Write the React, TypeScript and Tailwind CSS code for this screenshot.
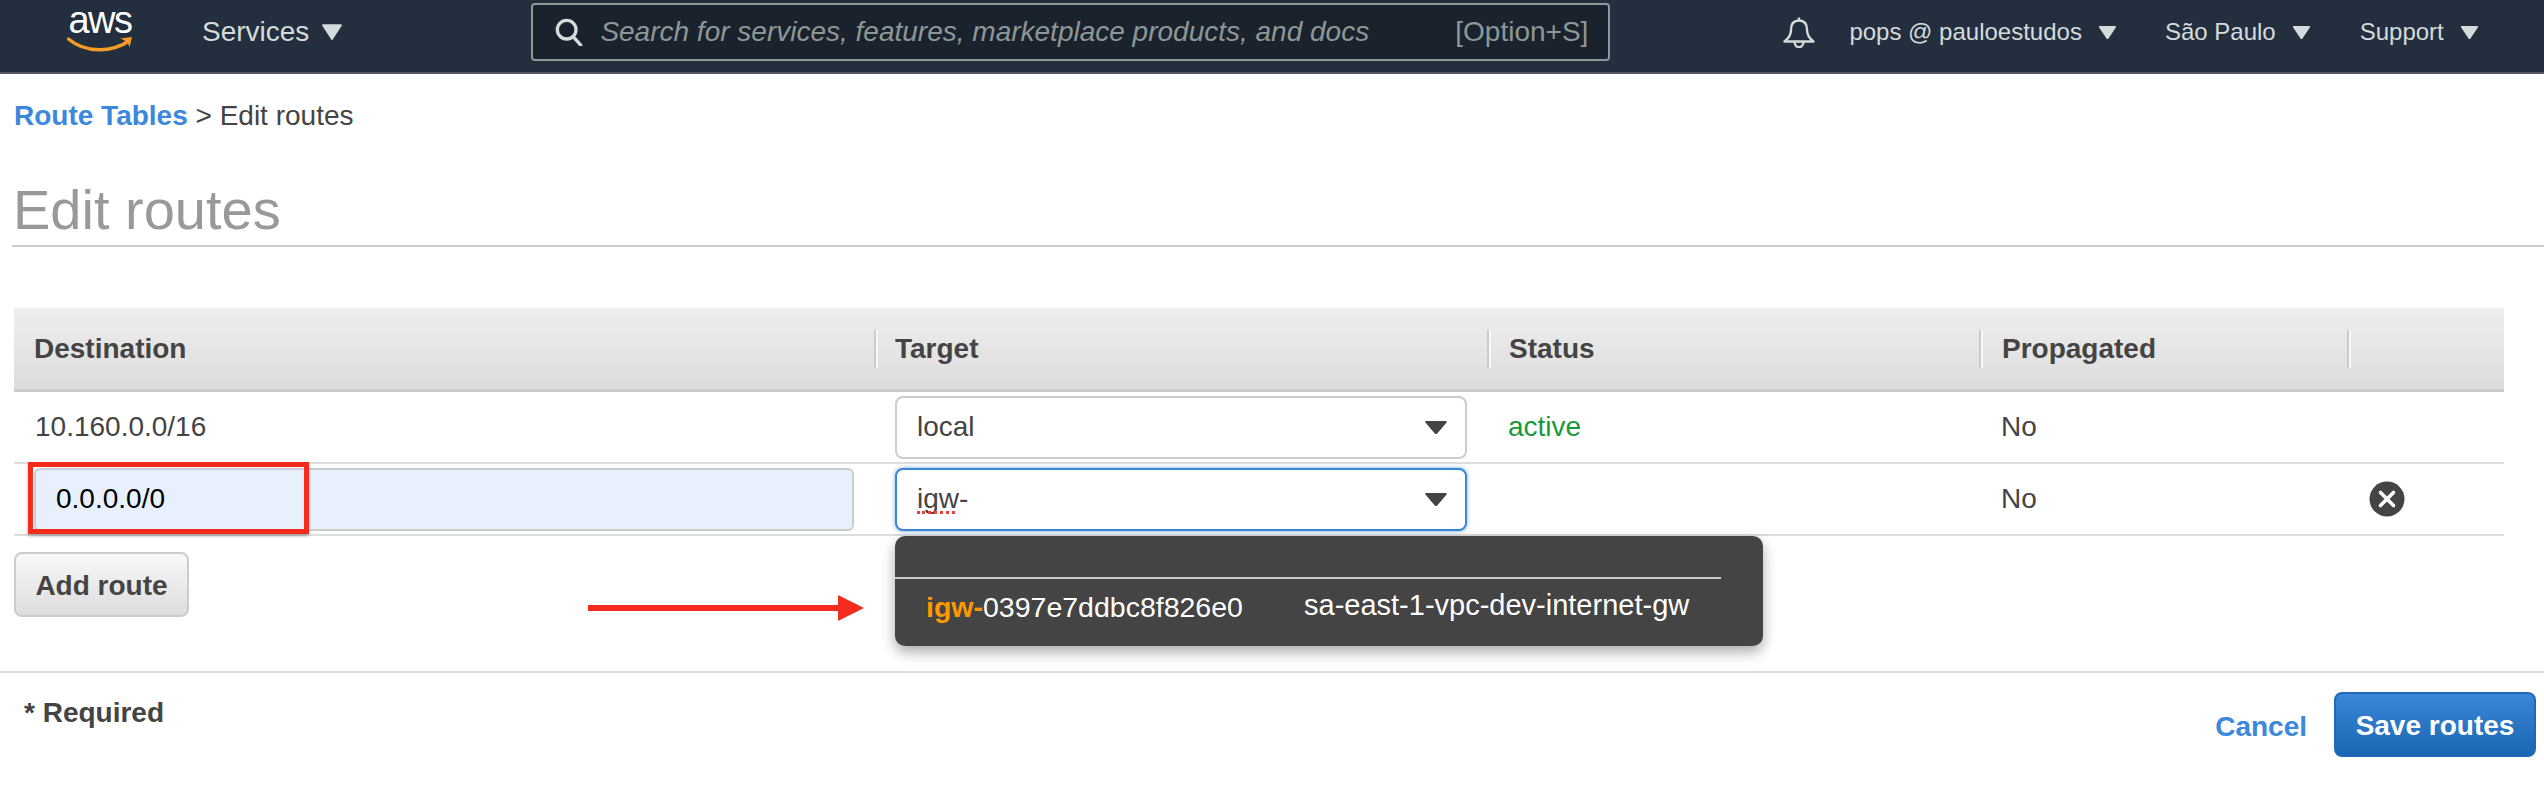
function Caret({ className }: { className: string }) {
  return (
    <svg viewBox="0 0 20 16" preserveAspectRatio="none" className={className} fill="currentColor" stroke="currentColor" strokeWidth="2" strokeLinejoin="round">
      <polygon points="2,2 18,2 10,14" />
    </svg>
  );
}

function NavLabel({ label }: { label: string }) {
  return (
    <div className="flex items-center">
      <span className="text-[24px] leading-[32px]">{label}</span>
      <Caret className="ml-4 h-[15px] w-[19px]" />
    </div>
  );
}

function AwsLogo() {
  return (
    <div className="flex w-[66px] shrink-0 flex-col items-center">
      <span className="mt-[-3px] text-[38px] leading-[24px] tracking-[-1.5px] text-white">aws</span>
      <svg viewBox="0 0 66 18" className="mt-[4px] h-[18px] w-[66px]">
        <path d="M1.5 3 C 18 17, 44 17, 62 5" fill="none" stroke="#f79c24" strokeWidth="3.4" strokeLinecap="round" />
        <path d="M53 2.5 L 65 1 L 62.5 11.5 C 62 7.5, 59 4.5, 53 2.5 Z" fill="#f79c24" />
      </svg>
    </div>
  );
}

function TopNav() {
  return (
    <header className="flex h-[74px] items-center border-b-2 border-[#545b64] bg-[#232f3e] pb-[8px] text-[#d5dbdb]">
      <div className="ml-[67px] flex">
        <AwsLogo />
      </div>
      <div className="ml-[69px] flex items-center">
        <span className="text-[28px] leading-[36px]">Services</span>
        <Caret className="ml-3 h-[18px] w-[22px]" />
      </div>
      <div className="ml-[188px] flex h-[58px] w-[1079px] items-center rounded-[4px] border-2 border-[#8d9797] bg-[#1a222d] pl-[22px] pr-[20px]">
        <svg viewBox="0 0 30 30" className="h-[28px] w-[28px] shrink-0" fill="none" stroke="#d5dbdb" strokeWidth="3.6">
          <circle cx="12.5" cy="12.5" r="10" />
          <path d="M19.5 20 L 27.5 29" strokeLinecap="round" />
        </svg>
        <span className="ml-[17px] text-[28px] italic leading-[36px] text-[#8d9797]">
          Search for services, features, marketplace products, and docs
        </span>
        <span className="ml-auto text-[28px] leading-[36px] text-[#8d9797]">[Option+S]</span>
      </div>
      <svg viewBox="0 0 32 32" className="ml-[173px] h-[32px] w-[32px] shrink-0" fill="none" stroke="#d5dbdb" strokeWidth="2.4" strokeLinejoin="round">
        <path d="M16 1.5 V 4.5 M 16 4.5 C 10 4.5 8 9 8 14 C 8 19 6 22 1.5 25.5 H 30.5 C 26 22 24 19 24 14 C 24 9 22 4.5 16 4.5 Z" />
        <path d="M11.5 25.5 C 11.5 33 20.5 33 20.5 25.5" />
      </svg>
      <div className="ml-[34px]">
        <NavLabel label="pops @ pauloestudos" />
      </div>
      <div className="ml-[48px]">
        <NavLabel label="São Paulo" />
      </div>
      <div className="ml-[49px]">
        <NavLabel label="Support" />
      </div>
    </header>
  );
}

function HeaderCell({ label, divider = true, padding }: { label?: string; divider?: boolean; padding: string }) {
  return (
    <div className="flex items-center">
      {divider && <div className="h-[38px] w-[4px] shrink-0 border-l-2 border-r-2 border-l-[#cccccc] border-r-[#f8f8f8]" />}
      {label && <span className={`${padding} text-[28px] font-bold leading-[32px] text-[#444444]`}>{label}</span>}
    </div>
  );
}

function SelectBox({ value, focused = false }: { value: string; focused?: boolean }) {
  return (
    <div
      className={`flex h-[63px] w-[572px] items-center justify-between rounded-[8px] border-2 bg-white pl-[20px] pr-[17px] ${
        focused ? "border-[#3a87d8] shadow-[0_0_4px_#3a87d8aa]" : "border-[#cccccc]"
      }`}
    >
      <span className="relative text-[28px] leading-[34px] text-[#444444]">
        {value}
        {focused && (
          <span className="absolute left-0 top-[28px] h-[4px] w-[38px] border-b-[3px] border-dotted border-[#e8413c]" />
        )}
      </span>
      <Caret className="h-[15px] w-[24px] text-[#444444]" />
    </div>
  );
}

function RouteGrid() {
  const columns = "grid grid-cols-[860px_613px_492px_368px_157px]";
  return (
    <div className="ml-[14px] mt-[61px] w-[2490px] text-[28px] text-[#444444]">
      <div className={`${columns} h-[84px] border-b-[3px] border-[#cccccc] bg-gradient-to-b from-[#eeeeee] to-[#dddddd]`}>
        <HeaderCell label="Destination" divider={false} padding="pl-[20px]" />
        <HeaderCell label="Target" padding="pl-[17px]" />
        <HeaderCell label="Status" padding="pl-[18px]" />
        <HeaderCell label="Propagated" padding="pl-[19px]" />
        <HeaderCell padding="" />
      </div>

      <div className={`${columns} h-[72px] items-center border-b-2 border-[#dddddd]`}>
        <div className="pl-[21px]">10.160.0.0/16</div>
        <div className="pl-[21px]">
          <SelectBox value="local" />
        </div>
        <div className="pl-[21px] text-[#169a3c]">active</div>
        <div className="pl-[22px]">No</div>
        <div />
      </div>

      <div className={`${columns} h-[72px] items-center border-b-2 border-[#dddddd]`}>
        <div className="relative pl-[20px]">
          <div className="flex h-[63px] w-[820px] items-center rounded-[6px] border-2 border-[#cccccc] bg-[#e8f0fe] pl-[20px] text-black">
            0.0.0.0/0
          </div>
          <div className="absolute left-[14px] top-[-6px] h-[72px] w-[281px] border-[5px] border-[#f32c1e] shadow-[0_2px_3px_#0000004d]" />
        </div>
        <div className="relative pl-[21px]">
          <SelectBox value="igw-" focused />
          <div className="absolute left-[21px] top-[68px] z-10 h-[110px] w-[868px] rounded-[10px] bg-[#444444] text-[29px] text-white shadow-[0_6px_14px_#00000055]">
            <div className="mt-[41px] w-[826px] border-t-2 border-[#cccccc] pt-[10px]">
              <div className="flex items-center pl-[31px] leading-[36px]">
                <span className="w-[378px] text-[28.5px]">
                  <span className="font-bold text-[#ff9900]">igw-</span>0397e7ddbc8f826e0
                </span>
                <span className="mt-[-3px]">sa-east-1-vpc-dev-internet-gw</span>
              </div>
            </div>
          </div>
        </div>
        <div />
        <div className="pl-[22px]">No</div>
        <div className="pl-[22px]">
          <svg viewBox="0 0 36 36" className="h-[36px] w-[36px]">
            <circle cx="18" cy="18" r="17.5" fill="#444444" />
            <path d="M11.5 11.5 L 24.5 24.5 M 24.5 11.5 L 11.5 24.5" stroke="#ffffff" strokeWidth="3.6" strokeLinecap="round" />
          </svg>
        </div>
      </div>
    </div>
  );
}

export default function App() {
  return (
    <div className="relative h-[806px] w-[2544px] overflow-hidden bg-white font-['Liberation_Sans',Arial,sans-serif]">
      <TopNav />

      <div className="ml-[14px] mt-[25px] text-[28px] leading-[34px] text-[#444444]">
        <span className="font-bold text-[#3b88dc]">Route Tables</span> &gt; Edit routes
      </div>

      <div className="ml-[12px] mt-[45px] border-b-2 border-[#cccccc] pb-[3px] pl-[1px]">
        <h1 className="text-[56px] font-normal leading-[64px] text-[#999999]">Edit routes</h1>
      </div>

      <RouteGrid />

      <button className="ml-[14px] mt-[16px] block h-[65px] w-[175px] rounded-[8px] border-2 border-[#cccccc] bg-gradient-to-b from-[#f8f8f8] to-[#dddddd] pt-[2px] text-[28px] font-bold text-[#444444]">
        Add route
      </button>

      <footer className="mt-[54px] flex items-start border-t-2 border-[#dddddd] pt-[19px]">
        <span className="ml-[24px] mt-[4px] text-[28px] font-bold leading-[34px] text-[#444444]">* Required</span>
        <span className="ml-auto mt-[18px] text-[28px] font-bold leading-[34px] text-[#3b88dc]">Cancel</span>
        <button className="ml-[27px] mr-[8px] h-[65px] w-[202px] rounded-[8px] border-2 border-[#1f6ab8] bg-gradient-to-b from-[#3a87d8] to-[#1a66b3] pt-[2px] text-[28px] font-bold text-white">
          Save routes
        </button>
      </footer>

      <svg viewBox="0 0 276 26" className="absolute left-[588px] top-[595px] h-[26px] w-[276px]" fill="#f42c1e">
        <rect x="0" y="10" width="252" height="6" />
        <polygon points="250,0 276,13 250,26" />
      </svg>
    </div>
  );
}
